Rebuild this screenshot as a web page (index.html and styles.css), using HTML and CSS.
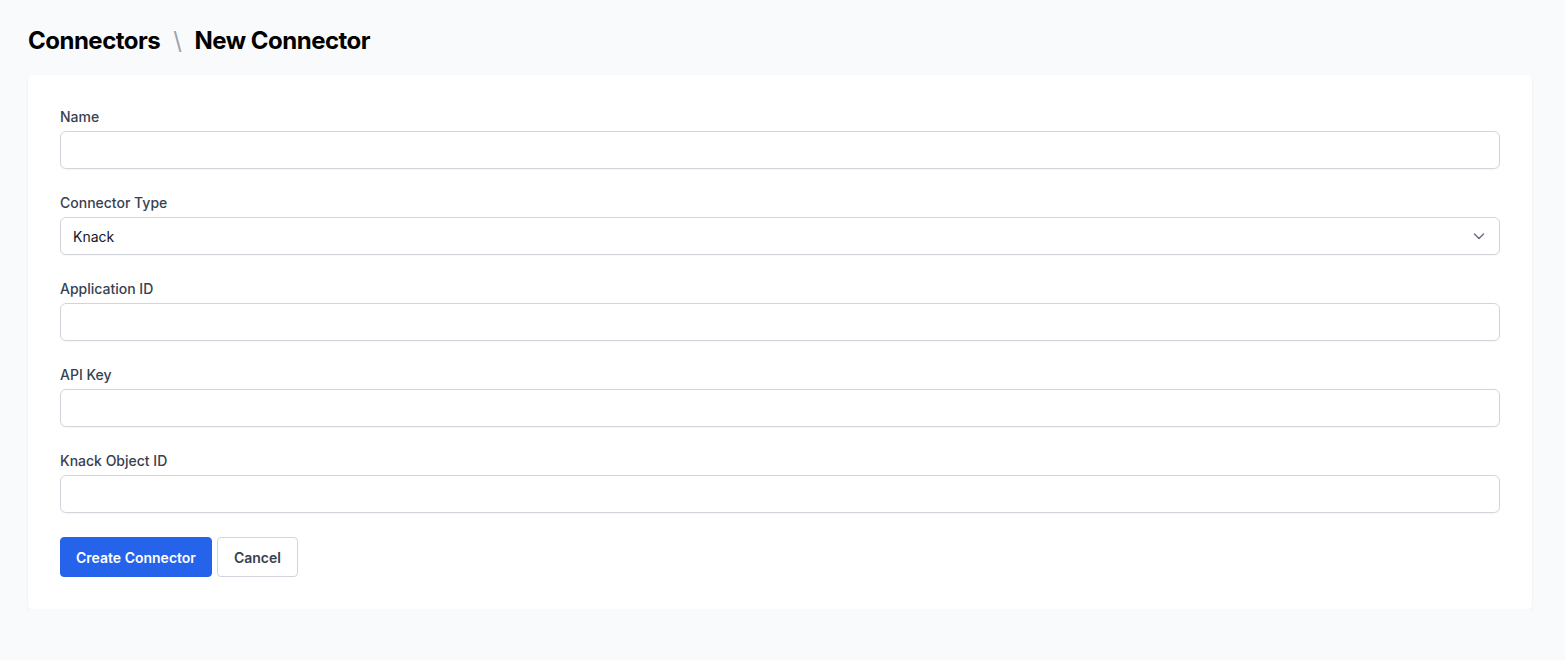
FILE: index.html
```html
<!DOCTYPE html>
<html>
<head>
<meta charset="utf-8">
<link rel="stylesheet" href="styles.css">
</head>
<body>
<div class="page">
  <h1 class="title"><span>Connectors</span><span class="sep">\</span><span>New Connector</span></h1>
  <form class="card">
    <div class="field">
      <label class="label">Name</label>
      <input class="input" type="text">
    </div>
    <div class="field">
      <label class="label">Connector Type</label>
      <div class="select">
        <span>Knack</span>
        <svg width="16" height="16" viewBox="0 0 16 16"><path d="M3.5 6 L8 10.5 L12.5 6" fill="none" stroke="#6b7280" stroke-width="1.5" stroke-linecap="round" stroke-linejoin="round"/></svg>
      </div>
    </div>
    <div class="field">
      <label class="label">Application ID</label>
      <input class="input" type="text">
    </div>
    <div class="field">
      <label class="label">API Key</label>
      <input class="input" type="text">
    </div>
    <div class="field">
      <label class="label">Knack Object ID</label>
      <input class="input" type="text">
    </div>
    <div class="actions">
      <button type="button" class="btn primary">Create Connector</button>
      <button type="button" class="btn secondary">Cancel</button>
    </div>
  </form>
</div>
</body>
</html>
```

FILE: styles.css
```css
* { box-sizing: border-box; }
html, body { margin: 0; padding: 0; }
body {
  background: #f9fafb;
  font-family: Inter, "Liberation Sans", sans-serif;
  color: #111827;
}
.page {
  padding: 26px 33px 0 28px;
}
.title {
  margin: 0 0 19px 0;
  font-size: 24px;
  line-height: 30px;
  font-weight: 700;
  color: #000;
  display: flex;
  gap: 13px;
  letter-spacing: -0.5px;
}
.sep {
  color: #9ca3af;
  font-weight: 400;
}
.card {
  background: #fff;
  border-radius: 4px;
  box-shadow: 0 1px 2px rgba(0,0,0,0.08), 0 0 1px rgba(0,0,0,0.04);
  padding: 32px;
  display: flex;
  flex-direction: column;
  gap: 24px;
}
.field {
  display: flex;
  flex-direction: column;
  gap: 4px;
}
.label {
  font-size: 14px;
  line-height: 20px;
  font-weight: 500;
  color: #374151;
}
.input, .select {
  height: 38px;
  border: 1px solid #d1d5db;
  border-radius: 6px;
  background: #fff;
  font-family: inherit;
  font-size: 14px;
  padding: 0 12px;
  box-shadow: 0 1px 2px rgba(0,0,0,0.04);
}
.select {
  display: flex;
  align-items: center;
  justify-content: space-between;
  color: #111827;
  padding: 0 12px 0 12px;
}
.actions {
  display: flex;
  gap: 5px;
}
.btn {
  height: 40px;
  font-family: inherit;
  font-size: 14px;
  font-weight: 600;
  border-radius: 4px;
  padding: 0 15px;
  cursor: pointer;
}
.primary {
  background: #2563eb;
  color: #fff;
  border: 1px solid #2563eb;
}
.secondary {
  background: #fff;
  color: #374151;
  border: 1px solid #d1d5db;
  padding: 0 16px;
}
```
